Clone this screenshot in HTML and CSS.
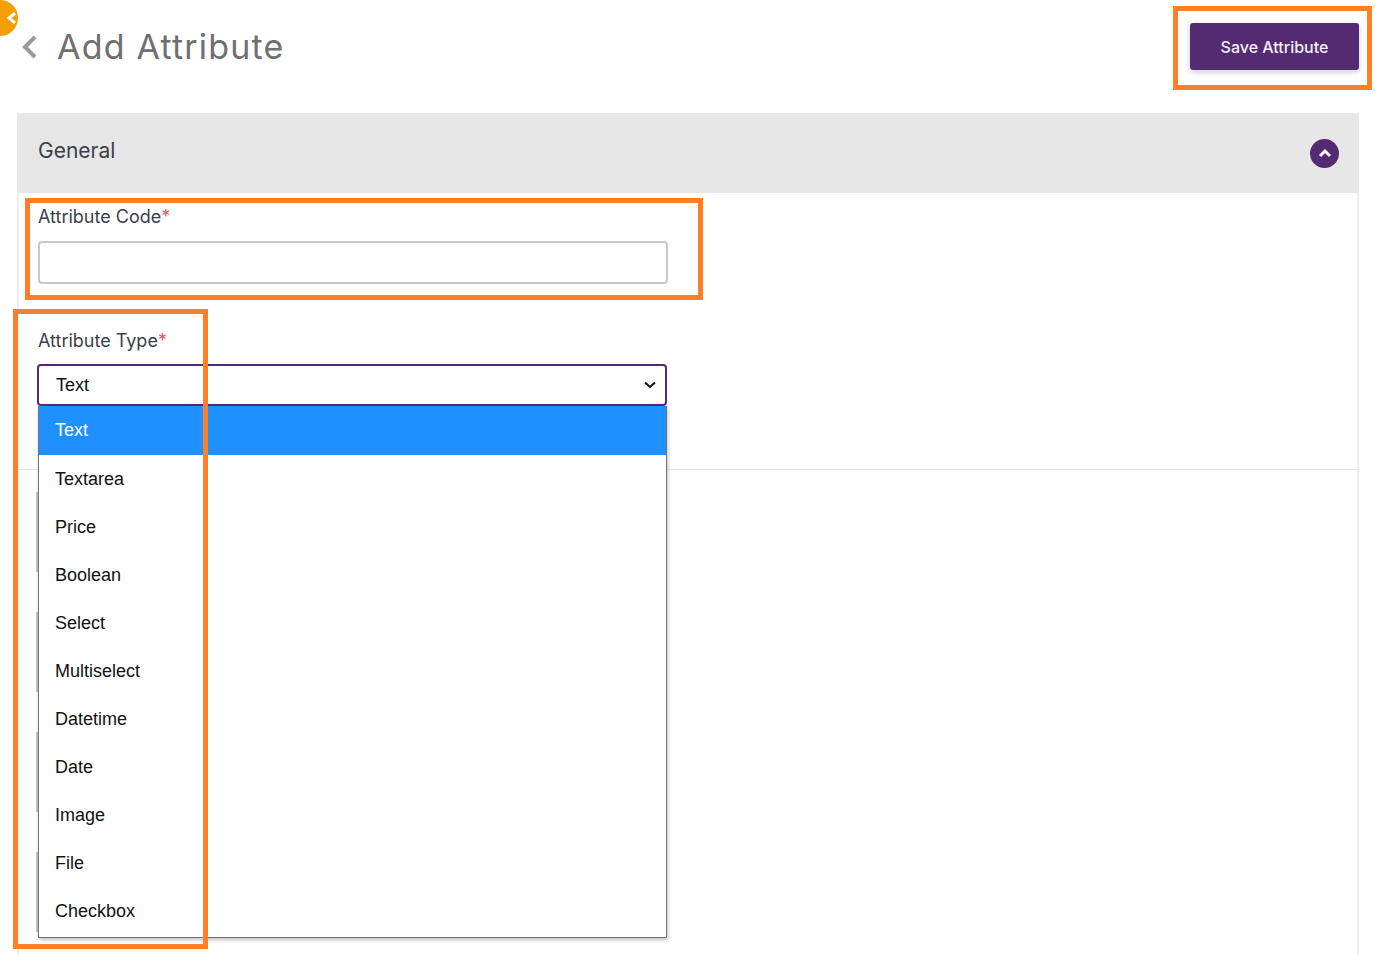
FILE: index.html
```html
<!DOCTYPE html>
<html lang="en">
<head>
    <meta charset="UTF-8">
    <title>Add Attribute</title>
    <link rel="stylesheet" href="styles.css">
</head>
<body>

    <div class="nav-toggle">
        <svg width="12" height="14" viewBox="0 0 12 14"><path d="M9 2 L3 7 L9 12" fill="none" stroke="#fff" stroke-width="3"/></svg>
    </div>

    <header class="page-header">
        <div class="page-title">
            <svg class="back-icon" width="18" height="26" viewBox="0 0 18 26"><path d="M14 3 L4 13 L14 23" fill="none" stroke="#9a9a9a" stroke-width="4"/></svg>
            <h1>Add Attribute</h1>
        </div>
        <button class="save-btn">Save Attribute</button>
    </header>

    <section class="panel">
        <div class="panel-head">
            <h2>General</h2>
            <span class="collapse-btn">
                <svg width="14" height="10" viewBox="0 0 14 10"><path d="M2 8 L7 3 L12 8" fill="none" stroke="#fff" stroke-width="3"/></svg>
            </span>
        </div>
        <div class="panel-body">
            <div class="field field-code">
                <label>Attribute Code<span class="req">*</span></label>
                <input type="text" class="text-input">
            </div>
            <div class="field field-type">
                <label>Attribute Type<span class="req">*</span></label>
                <div class="select-box">
                    <span>Text</span>
                    <svg width="12" height="8" viewBox="0 0 12 8"><path d="M1 1.5 L6 6 L11 1.5" fill="none" stroke="#111" stroke-width="2"/></svg>
                </div>
                <ul class="select-list">
                    <li class="active">Text</li>
                    <li>Textarea</li>
                    <li>Price</li>
                    <li>Boolean</li>
                    <li>Select</li>
                    <li>Multiselect</li>
                    <li>Datetime</li>
                    <li>Date</li>
                    <li>Image</li>
                    <li>File</li>
                    <li>Checkbox</li>
                </ul>
            </div>
        </div>
        <div class="panel-rest">
            <div class="ghost-input"></div>
            <div class="ghost-input"></div>
            <div class="ghost-input"></div>
            <div class="ghost-input"></div>
        </div>
    </section>

    <div class="mark mark-save"></div>
    <div class="mark mark-code"></div>
    <div class="mark mark-type"></div>

</body>
</html>
```

FILE: styles.css
```css
html, body {
    height: 955px;
    overflow: hidden;
}

body {
    font-family: 'Inter', 'Open Sans', sans-serif;
    background: #fff;
    margin: 0;
    padding: 0;
    position: relative;
    color: #3b3f4a;
}

.nav-toggle {
    position: absolute;
    left: -18px;
    top: 0;
    width: 36px;
    height: 36px;
    border-radius: 50%;
    background: #f59e00;
    display: flex;
    align-items: center;
    justify-content: flex-end;
    padding-right: 0;
    box-sizing: border-box;
}

.page-header {
    display: flex;
    justify-content: space-between;
    align-items: center;
    height: 93px;
    padding: 0 21px 0 21px;
    box-sizing: border-box;
}

.page-title {
    display: flex;
    align-items: center;
    gap: 18px;
}

.page-title h1 {
    margin: 0;
    font-size: 34px;
    font-weight: 400;
    letter-spacing: 1.2px;
    color: #6f6f6f;
}

.save-btn {
    width: 169px;
    height: 47px;
    background: #542b72;
    color: #f4f0f6;
    border: none;
    border-radius: 3px;
    font-family: inherit;
    font-size: 16px;
    font-weight: 500;
    box-shadow: 0 2px 6px rgba(0, 0, 0, 0.2);
}

.panel {
    margin: 20px 21px 0 17px;
    border-right: 2px solid #eee;
    border-left: 2px solid #eee;
    height: 842px;
}

.panel-head {
    margin: 0 -2px;
    height: 80px;
    background: #e7e7e7;
    padding: 0 20px 0 21px;
    display: flex;
    justify-content: space-between;
    align-items: center;
}

.panel-head h2 {
    margin: 0 0 6px 0;
    font-size: 21px;
    font-weight: 400;
    color: #3b3f4a;
}

.collapse-btn {
    width: 29px;
    height: 29px;
    border-radius: 50%;
    background: #542b72;
    display: flex;
    align-items: center;
    justify-content: center;
}

.panel-body {
    height: 277px;
    padding: 0 19px;
    border-bottom: 1px solid #e6e6e6;
    box-sizing: border-box;
}

.field label {
    display: block;
    font-size: 18px;
    line-height: 22px;
    color: #3b3f4a;
}

.req {
    color: #ff4d5e;
}

.field-code {
    padding-top: 13px;
}

.text-input {
    display: block;
    width: 630px;
    height: 43px;
    margin-top: 13px;
    border: 2px solid #c8c8c8;
    border-radius: 4px;
    box-sizing: border-box;
    background: #fff;
}

.field-type {
    position: relative;
    padding-top: 46px;
}

.select-box {
    width: 630px;
    height: 42px;
    margin: 12px 0 0 -1px;
    border: 2px solid #542b72;
    border-radius: 4px;
    box-sizing: border-box;
    display: flex;
    justify-content: space-between;
    align-items: center;
    padding: 0 9px 0 17px;
    font-family: 'Liberation Sans', Arial, sans-serif;
    font-size: 18px;
    color: #111;
    background: #fff;
}

.select-list {
    list-style: none;
    margin: 0;
    padding: 0;
    position: absolute;
    left: 0;
    top: 122px;
    width: 629px;
    height: 532px;
    box-sizing: border-box;
    background: #fff;
    border: 1px solid #767676;
    border-top: none;
    box-shadow: 1px 2px 4px rgba(0, 0, 0, 0.25);
    font-family: 'Liberation Sans', Arial, sans-serif;
    font-size: 18px;
    color: #111;
    z-index: 2;
}

.select-list li {
    height: 48px;
    line-height: 48px;
    padding-left: 16px;
}

.select-list .active {
    height: 49px;
    background: #1e90ff;
    color: #fff;
}

.panel-rest {
    padding: 22px 0 0 17px;
}

.ghost-input {
    width: 40px;
    height: 80px;
    margin-bottom: 40px;
    border-left: 3px solid #c8c8c8;
}

.mark {
    position: absolute;
    border: 5px solid #ff7f27;
    box-sizing: border-box;
    z-index: 5;
}

.mark-save {
    left: 1173px;
    top: 6px;
    width: 199px;
    height: 84px;
}

.mark-code {
    left: 25px;
    top: 198px;
    width: 678px;
    height: 102px;
}

.mark-type {
    left: 13px;
    top: 309px;
    width: 195px;
    height: 640px;
}
```
